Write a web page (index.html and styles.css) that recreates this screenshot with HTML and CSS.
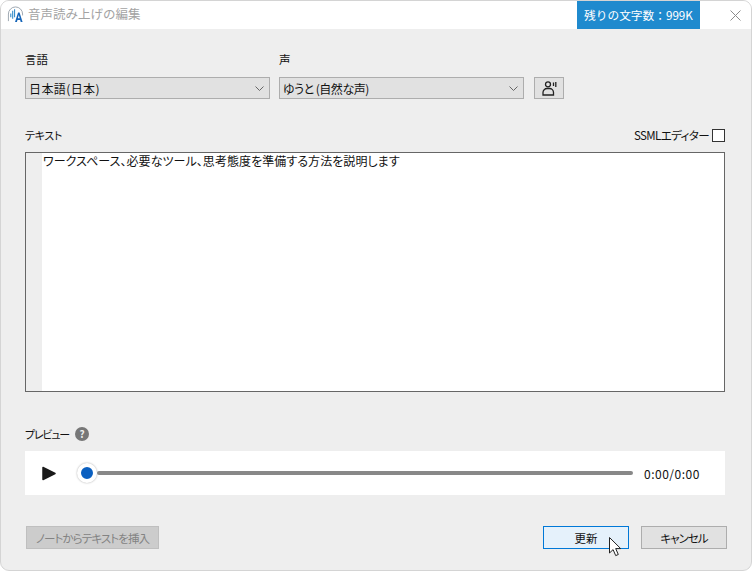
FILE: index.html
```html
<!DOCTYPE html>
<html lang="ja">
<head>
    <meta charset="UTF-8">
    <title>音声読み上げの編集</title>
    <link rel="stylesheet" href="styles.css">
</head>
<body>
    <div class="dialog">
        <header class="titlebar">
            <svg class="app-icon" viewBox="0 0 18 18" fill="none">
                <path d="M1.500 16V8.500a7.500 7.500 0 0 1 15 0v1.500" stroke="#9aa4ad" stroke-width="1"/>
                <path d="M4 8v4M6 5v8.500M8 3.500v8.500" stroke="#3a8fcb" stroke-width="1.200"/>
                <path d="M8.500 17l3.200-10h1.600l3.200 10h-2l-.6-2.300h-2.800l-.6 2.300zM11.500 13h2l-1-3.400z" fill="#1565b8"/>
            </svg>
            <span class="title">音声読み上げの編集</span>
            <span class="quota">残りの文字数：999K</span>
            <svg class="close" viewBox="0 0 11 11" fill="none">
                <path d="M.5.5l10 10M10.500.5l-10 10" stroke="#8c8c8c" stroke-width="1"/>
            </svg>
        </header>

        <main class="content">
            <div class="fields">
                <div class="field">
                    <label class="label">言語</label>
                    <div class="select select-lang">
                        <span>日本語(日本)</span>
                        <svg class="chevron" viewBox="0 0 9 5" fill="none"><path d="M.5.5l4 4 4-4" stroke="#666"/></svg>
                    </div>
                </div>
                <div class="field">
                    <label class="label">声</label>
                    <div class="select select-voice">
                        <span>ゆうと (自然な声)</span>
                        <svg class="chevron" viewBox="0 0 9 5" fill="none"><path d="M.5.5l4 4 4-4" stroke="#666"/></svg>
                    </div>
                </div>
                <button class="voice-button">
                    <svg viewBox="0 0 15 15" fill="none" stroke="#222" stroke-width="1.300">
                        <circle cx="6" cy="3.300" r="2.500"/>
                        <path d="M1 14v-2.500a4 4 0 0 1 4-4h2.500a4 4 0 0 1 4 4V14z"/>
                        <path d="M11.500 1.500V5M13.800 1v5"/>
                    </svg>
                </button>
            </div>

            <div class="text-head">
                <span class="label label-text">テキスト</span>
                <span class="ssml">SSMLエディター<span class="checkbox"></span></span>
            </div>
            <div class="editor">
                <div class="gutter"></div>
                <div class="editor-text">ワークスペース、必要なツール、思考態度を準備する方法を説明します</div>
            </div>

            <div class="preview-head">
                <span class="label label-preview">プレビュー</span>
                <span class="help">?</span>
            </div>
            <div class="player">
                <svg class="play" viewBox="0 0 14 15"><path d="M1 1.500l12 6-12 6z" fill="#1a1a1a" stroke="#1a1a1a" stroke-width="1.500" stroke-linejoin="round"/></svg>
                <span class="thumb"></span>
                <span class="track"></span>
                <span class="time">0:00/0:00</span>
            </div>

            <footer class="actions">
                <button class="btn btn-disabled">ノートからテキストを挿入</button>
                <button class="btn btn-primary">更新</button>
                <button class="btn btn-cancel">キャンセル</button>
            </footer>
        </main>

        <svg class="cursor" viewBox="0 0 14 20">
            <path d="M.5.5v15.500l3.600-3.400 2.600 6 2.600-1.100-2.600-5.900h5z" fill="#fff" stroke="#222" stroke-width="1"/>
        </svg>
    </div>
</body>
</html>
```

FILE: styles.css
```css
html, body {
    margin: 0;
    padding: 0;
    background-color: #fff;
}
body {
    font-family: "Noto Sans CJK JP", "Noto Sans", sans-serif;
    font-size: 12px;
    font-feature-settings: "palt";
    color: #111;
}
.dialog {
    position: relative;
    width: 752px;
    height: 571px;
    box-sizing: border-box;
    border: 1px solid #d4d4d4;
    border-radius: 9px;
    overflow: hidden;
    background-color: #eeeeee;
    display: flex;
    flex-direction: column;
}
.titlebar {
    height: 28px;
    flex: none;
    background-color: #fff;
    display: flex;
    align-items: center;
    padding-left: 6px;
}
.app-icon {
    width: 17px;
    height: 17px;
    margin-bottom: 2px;
}
.title {
    margin-left: 4px;
    margin-bottom: 3px;
    font-size: 12.5px;
    font-feature-settings: normal;
    color: #a3a3a3;
}
.quota {
    margin-left: auto;
    width: 123px;
    height: 28px;
    line-height: 28px;
    text-align: center;
    font-size: 11.7px;
    font-feature-settings: normal;
    color: #fff;
    background-color: #1f8ace;
    box-sizing: border-box;
}
.close {
    width: 11px;
    height: 11px;
    margin: 0 10px 0 30px;
}
.content {
    flex: 1;
    padding: 0 24px;
    display: flex;
    flex-direction: column;
}
.fields {
    display: flex;
    align-items: flex-end;
    margin-top: 21px;
}
.field {
    width: 245px;
    margin-right: 9px;
}
.field + .field {
    margin-right: 10px;
}
.label {
    display: block;
    font-size: 11.5px;
    line-height: 18px;
    color: #111;
}
.label-text {
    font-size: 11px;
    letter-spacing: -0.3px;
}
.label-preview {
    font-size: 11px;
    letter-spacing: -1.2px;
}
.select {
    margin-top: 9px;
    height: 22px;
    box-sizing: border-box;
    border: 1px solid #adadad;
    background-color: #e1e1e1;
    display: flex;
    align-items: center;
    justify-content: space-between;
    padding: 0 5px 0 3px;
    font-size: 12px;
}
.select-lang span {
    letter-spacing: 0.4px;
}
.select-voice span {
    letter-spacing: -0.5px;
}
.chevron {
    width: 9px;
    height: 5px;
}
.voice-button {
    width: 30px;
    height: 22px;
    padding: 0;
    border: 1px solid #adadad;
    background-color: #e1e1e1;
    display: flex;
    align-items: center;
    justify-content: center;
}
.voice-button svg {
    width: 15px;
    height: 15px;
}
.text-head {
    display: flex;
    justify-content: space-between;
    align-items: center;
    margin-top: 27px;
    height: 18px;
}
.ssml {
    display: flex;
    align-items: center;
    font-size: 11.5px;
    letter-spacing: -0.6px;
    margin-right: 2px;
}
.checkbox {
    width: 13px;
    height: 13px;
    box-sizing: border-box;
    border: 1px solid #333;
    background-color: #fff;
    margin-left: 3px;
}
.editor {
    margin-top: 8px;
    width: 700px;
    height: 240px;
    box-sizing: border-box;
    border: 1px solid #666;
    background-color: #fff;
    display: flex;
}
.gutter {
    width: 16px;
    background-color: #eeeeee;
}
.editor-text {
    font-size: 12px;
    line-height: 16px;
    padding-left: 1px;
    letter-spacing: 0.06px;
    color: #111;
}
.preview-head {
    display: flex;
    align-items: center;
    margin-top: 33px;
    height: 18px;
}
.help {
    width: 14px;
    height: 14px;
    margin-left: 6px;
    border-radius: 50%;
    background-color: #777;
    color: #eee;
    font-size: 10px;
    font-weight: 700;
    line-height: 14px;
    text-align: center;
}
.player {
    margin-top: 8px;
    width: 700px;
    height: 44px;
    background-color: #fff;
    display: flex;
    align-items: center;
    padding-left: 17px;
    box-sizing: border-box;
}
.play {
    width: 14px;
    height: 15px;
}
.thumb {
    width: 12px;
    height: 12px;
    margin-left: 21px;
    border-radius: 50%;
    background-color: #0a5fc0;
    border: 4px solid #fff;
    box-shadow: 0 0 2px rgba(0, 0, 0, 0.35);
    flex: none;
}
.track {
    width: 536px;
    height: 4px;
    border-radius: 2px;
    background-color: #888;
}
.time {
    margin-left: 11px;
    font-size: 12px;
    letter-spacing: 0.5px;
}
.actions {
    display: flex;
    margin-top: 31px;
    padding-left: 1px;
}
.btn {
    width: 86px;
    height: 23px;
    padding: 0;
    box-sizing: border-box;
    border: 1px solid #adadad;
    background-color: #e1e1e1;
    font-family: inherit;
    font-feature-settings: inherit;
    font-size: 11.5px;
    white-space: nowrap;
    color: #111;
}
.btn-disabled {
    width: 133px;
    margin-right: auto;
    background-color: #cccccc;
    border-color: #bfbfbf;
    color: #838383;
    letter-spacing: -0.9px;
}
.btn-primary {
    margin-right: 12px;
    background-color: #e5f1fb;
    border-color: #0078d7;
}
.btn-cancel {
    letter-spacing: -1px;
}
.cursor {
    position: absolute;
    left: 608px;
    top: 536px;
    width: 14px;
    height: 20px;
}
```
